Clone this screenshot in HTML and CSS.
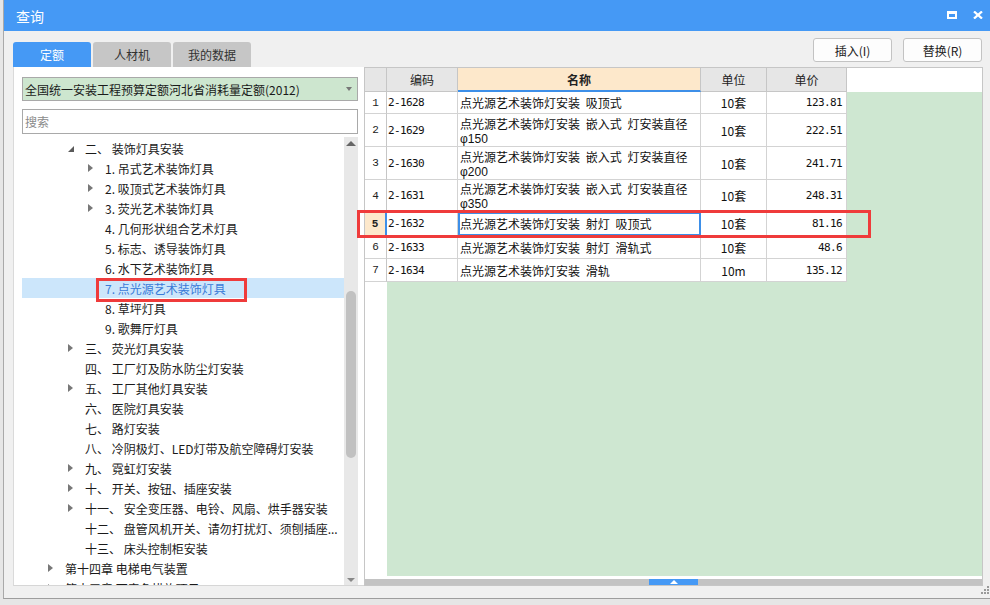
FILE: index.html
```html
<!DOCTYPE html>
<html lang="zh-CN">
<head>
<meta charset="utf-8">
<title>查询</title>
<link rel="stylesheet" href="styles.css">
</head>
<body>
<div class="win">
  <div class="titlebar">
    <span class="title">查询</span>
    <div class="wctl">
      <span class="maxbox"></span>
      <svg class="closex" width="10" height="8" viewBox="0 0 10 8"><path d="M1 0.5 L9 7.5 M9 0.5 L1 7.5" stroke="#fff" stroke-width="2.3" fill="none"/></svg>
    </div>
  </div>
  <div class="body">
    <div class="topbar">
      <div class="tabs">
        <div class="tab active">定额</div>
        <div class="tab">人材机</div>
        <div class="tab">我的数据</div>
      </div>
      <div class="actions">
        <div class="btn">插入(I)</div>
        <div class="btn">替换(R)</div>
      </div>
    </div>
    <div class="main">
      <div class="left">
        <div class="combo"><span>全国统一安装工程预算定额河北省消耗量定额(2012)</span><i class="caret"></i></div>
        <div class="search">搜索</div>
        <div class="treewrap">
          <div class="tree">
            <div class="node l2"><i class="exp"></i><span>二、 装饰灯具安装</span></div>
            <div class="node l3"><i class="col"></i><span>1. 吊式艺术装饰灯具</span></div>
            <div class="node l3"><i class="col"></i><span>2. 吸顶式艺术装饰灯具</span></div>
            <div class="node l3"><i class="col"></i><span>3. 荧光艺术装饰灯具</span></div>
            <div class="node l3"><i></i><span>4. 几何形状组合艺术灯具</span></div>
            <div class="node l3"><i></i><span>5. 标志、诱导装饰灯具</span></div>
            <div class="node l3"><i></i><span>6. 水下艺术装饰灯具</span></div>
            <div class="node l3 sel"><i></i><span>7. 点光源艺术装饰灯具</span></div>
            <div class="node l3"><i></i><span>8. 草坪灯具</span></div>
            <div class="node l3"><i></i><span>9. 歌舞厅灯具</span></div>
            <div class="node l2"><i class="col"></i><span>三、 荧光灯具安装</span></div>
            <div class="node l2"><i></i><span>四、 工厂灯及防水防尘灯安装</span></div>
            <div class="node l2"><i class="col"></i><span>五、 工厂其他灯具安装</span></div>
            <div class="node l2"><i></i><span>六、 医院灯具安装</span></div>
            <div class="node l2"><i></i><span>七、 路灯安装</span></div>
            <div class="node l2"><i></i><span>八、 冷阴极灯、LED灯带及航空障碍灯安装</span></div>
            <div class="node l2"><i class="col"></i><span>九、 霓虹灯安装</span></div>
            <div class="node l2"><i class="col"></i><span>十、 开关、按钮、插座安装</span></div>
            <div class="node l2"><i class="col"></i><span>十一、 安全变压器、电铃、风扇、烘手器安装</span></div>
            <div class="node l2"><i></i><span>十二、 盘管风机开关、请勿打扰灯、须刨插座...</span></div>
            <div class="node l2"><i></i><span>十三、 床头控制柜安装</span></div>
            <div class="node l1"><i class="col"></i><span>第十四章 电梯电气装置</span></div>
            <div class="node l1"><i class="col"></i><span>第十五章 可竞争措施项目</span></div>
          </div>
          <div class="vscroll">
            <i class="up"></i>
            <i class="thumb"></i>
            <i class="down"></i>
          </div>
        </div>
      </div>
      <div class="right">
        <div class="gridarea">
          <div class="gtable">
            <div class="c h"></div>
            <div class="c h">编码</div>
            <div class="c h hsel">名称</div>
            <div class="c h">单位</div>
            <div class="c h">单价</div>

            <div class="c rn">1</div>
            <div class="c code">2-1628</div>
            <div class="c name">点光源艺术装饰灯安装 吸顶式</div>
            <div class="c unit">10套</div>
            <div class="c price">123.81</div>

            <div class="c rn">2</div>
            <div class="c code">2-1629</div>
            <div class="c name two"><span class="ln1">点光源艺术装饰灯安装 嵌入式 灯安装直径</span><span class="ln2">φ150</span></div>
            <div class="c unit">10套</div>
            <div class="c price">222.51</div>

            <div class="c rn">3</div>
            <div class="c code">2-1630</div>
            <div class="c name two"><span class="ln1">点光源艺术装饰灯安装 嵌入式 灯安装直径</span><span class="ln2">φ200</span></div>
            <div class="c unit">10套</div>
            <div class="c price">241.71</div>

            <div class="c rn">4</div>
            <div class="c code">2-1631</div>
            <div class="c name two"><span class="ln1">点光源艺术装饰灯安装 嵌入式 灯安装直径</span><span class="ln2">φ350</span></div>
            <div class="c unit">10套</div>
            <div class="c price">248.31</div>

            <div class="c rn rsel">5</div>
            <div class="c code">2-1632</div>
            <div class="c name cur">点光源艺术装饰灯安装 射灯 吸顶式</div>
            <div class="c unit">10套</div>
            <div class="c price">81.16</div>

            <div class="c rn">6</div>
            <div class="c code">2-1633</div>
            <div class="c name">点光源艺术装饰灯安装 射灯 滑轨式</div>
            <div class="c unit">10套</div>
            <div class="c price">48.6</div>

            <div class="c rn">7</div>
            <div class="c code">2-1634</div>
            <div class="c name">点光源艺术装饰灯安装 滑轨</div>
            <div class="c unit">10m</div>
            <div class="c price">135.12</div>
          </div>
        </div>
        <div class="hscroll"><i class="hthumb"></i></div>
      </div>
    </div>
    <i class="grip"></i>
  </div>
  <div class="redbox red-tree"></div>
  <div class="redbox red-grid"></div>
</div>
</body>
</html>
```
FILE: styles.css
```css
* { box-sizing: border-box; }
html, body { margin: 0; padding: 0; }
body {
  background: #e6e6e6;
  font-family: "Noto Sans CJK SC", "Microsoft YaHei", sans-serif;
  font-size: 12px;
  color: #1e1e1e;
}
i { font-style: normal; display: block; }

.win {
  position: relative;
  margin-left: 3px;
  width: 987px;
  height: 599px;
  background: #f0f0f0;
  border-left: 1px solid #a9a9a9;
  border-bottom: 1px solid #9d9d9d;
  display: flex;
  flex-direction: column;
}

.titlebar {
  flex: none;
  height: 31px;
  background: #4599f5;
  color: #fff;
  display: flex;
  align-items: center;
  padding-left: 12px;
  font-size: 14px;
}
.wctl {
  margin-left: auto;
  display: flex;
  align-items: center;
  gap: 16px;
  padding-right: 7px;
  margin-top: -1px;
}
.maxbox {
  display: block;
  width: 10px;
  height: 8px;
  border: 2px solid #fff;
  border-top-width: 3px;
}
.closex { display: block; }

.body {
  position: relative;
  flex: 1;
  display: flex;
  flex-direction: column;
  padding: 0 7px 12px 9px;
  min-height: 0;
}

.topbar {
  flex: none;
  height: 36px;
  display: flex;
}
.tabs {
  display: flex;
  gap: 2px;
  align-self: flex-end;
}
.tab {
  width: 78px;
  height: 25px;
  border-radius: 3px 3px 0 0;
  background: #c6c6c6;
  color: #333;
  display: flex;
  align-items: center;
  justify-content: center;
}
.tab.active { background: #4599f5; color: #fff; }
.actions {
  margin-left: auto;
  margin-top: 7px;
  margin-right: 1px;
  align-self: flex-start;
  display: flex;
  gap: 11px;
}
.btn {
  width: 79px;
  height: 24px;
  border: 1px solid #c3c3c3;
  border-radius: 3px;
  background: #fdfdfd;
  color: #222;
  display: flex;
  align-items: center;
  justify-content: center;
}

.main {
  flex: 1;
  display: flex;
  min-height: 0;
}

.left {
  flex: none;
  width: 351px;
  background: #fff;
  border-left: 1px solid #dadada;
  border-bottom: 1px solid #d6d6d6;
  padding: 10px 6px 0 8px;
  display: flex;
  flex-direction: column;
}
.combo {
  flex: none;
  height: 24px;
  border: 1px solid #a9a9a9;
  background: #cde6cf;
  display: flex;
  align-items: center;
  padding-left: 2px;
  color: #1a1a1a;
}
.caret {
  margin-left: auto;
  margin-right: 5px;
  width: 0;
  height: 0;
  border-top: 4px solid #777;
  border-left: 3px solid transparent;
  border-right: 3px solid transparent;
}
.search {
  flex: none;
  margin-top: 8px;
  height: 25px;
  border: 1px solid #a9a9a9;
  color: #8a8a8a;
  padding-left: 2px;
  display: flex;
  align-items: center;
}
.treewrap {
  margin-top: 3px;
  flex: 1;
  display: flex;
  min-height: 0;
}
.tree {
  flex: 1;
  overflow: hidden;
  padding-top: 1px;
}
.node {
  height: 20px;
  display: flex;
  align-items: center;
  white-space: nowrap;
  color: #1a1a1a;
}
.node.l1 { padding-left: 26px; }
.node.l2 { padding-left: 46px; }
.node.l3 { padding-left: 66px; }
.node > i {
  flex: none;
  width: 17px;
  display: flex;
  align-items: center;
}
.node > i.col::before {
  content: "";
  width: 0;
  height: 0;
  border-left: 5px solid #787878;
  border-top: 4px solid transparent;
  border-bottom: 4px solid transparent;
}
.node > i.exp::before {
  content: "";
  width: 0;
  height: 0;
  border-bottom: 6px solid #5a5a5a;
  border-left: 6px solid transparent;
  margin-top: 1px;
}
.node.sel { background: #cce6fb; color: #3a7bd8; }

.vscroll {
  flex: none;
  width: 14px;
  background: #e8e8e8;
  position: relative;
}
.vscroll .up {
  position: absolute;
  top: 4px;
  left: 2px;
  width: 0;
  height: 0;
  border-bottom: 5px solid #666;
  border-left: 5px solid transparent;
  border-right: 5px solid transparent;
}
.vscroll .thumb {
  position: absolute;
  top: 154px;
  left: 2px;
  width: 10px;
  height: 167px;
  border-radius: 5px;
  background: #c1c1c1;
}
.vscroll .down {
  position: absolute;
  bottom: 3px;
  left: 3px;
  width: 0;
  height: 0;
  border-top: 4px solid #888;
  border-left: 4px solid transparent;
  border-right: 4px solid transparent;
}

.right {
  flex: 1;
  border: 1px solid #c6c6c6;
  background: #fff;
  display: flex;
  flex-direction: column;
  min-width: 0;
}
.gridarea {
  flex: 1;
  background:
    linear-gradient(#fff, #fff) 0 0 / 100% 24px no-repeat,
    linear-gradient(90deg, #fff 22px, #cee7d1 22px);
}
.gtable {
  display: grid;
  width: 482px;
  grid-template-columns: 22px 71px 243px 66px 80px;
  grid-template-rows: 24px 22px 33px 33px 32px 24px 23px 23px;
}
.c {
  background: #fff;
  border-right: 1px solid #d3d3d3;
  border-bottom: 1px solid #d3d3d3;
  display: flex;
  align-items: center;
  color: #111;
  white-space: nowrap;
}
.c.h {
  background: #e6e6e6;
  border-color: #c6c6c6;
  justify-content: center;
  color: #222;
}
.c.hsel {
  background: #fde8cb;
  font-weight: bold;
  border-bottom: 2px solid #3d8fe8;
}
.c.rn {
  justify-content: center;
  font-family: "Liberation Mono", monospace;
  font-size: 11px;
  border-right-color: #c6c6c6;
  color: #222;
}
.c.rsel {
  background: #fde8cb;
  font-weight: bold;
  border-right: 2px solid #3d8fe8;
}
.c.code {
  padding-left: 1px;
  font-family: "DejaVu Sans Mono", monospace;
  font-size: 11px;
  letter-spacing: -0.6px;
}
.c.name {
  padding-left: 2px;
  word-spacing: 3px;
}
.c.name.two {
  flex-direction: column;
  align-items: flex-start;
  justify-content: center;
}
.ln1 { display: block; line-height: 17px; }
.ln2 {
  display: block;
  line-height: 14px;
  font-family: "Liberation Sans", sans-serif;
}
.c.cur {
  outline: 2px solid #3d8fe8;
  outline-offset: -2px;
}
.c.unit { justify-content: center; }
.c.price {
  justify-content: flex-end;
  padding-right: 4px;
  font-family: "DejaVu Sans Mono", monospace;
  font-size: 11px;
  letter-spacing: -0.6px;
}

.hscroll {
  flex: none;
  height: 6px;
  margin-top: 3px;
  background: #c3c3c3;
  position: relative;
}
.hthumb {
  position: absolute;
  left: 284px;
  top: 0;
  width: 49px;
  height: 6px;
  background: #4599f5;
}
.hthumb::after {
  content: "";
  position: absolute;
  left: 21px;
  top: 1px;
  width: 0;
  height: 0;
  border-bottom: 4px solid #fff;
  border-left: 4px solid transparent;
  border-right: 4px solid transparent;
}

.grip {
  position: absolute;
  right: 1px;
  bottom: 4px;
  width: 2px;
  height: 2px;
  background: #9a9a9a;
  box-shadow: -3px 0 #9a9a9a, -6px 0 #9a9a9a, 0 -3px #9a9a9a, -3px -3px #9a9a9a, 0 -6px #9a9a9a;
}

.redbox {
  position: absolute;
  border: 3px solid #ef3b3b;
  pointer-events: none;
}
.red-tree { left: 92px; top: 278px; width: 151px; height: 24px; }
.red-grid { left: 353px; top: 210px; width: 514px; height: 28px; }
```
